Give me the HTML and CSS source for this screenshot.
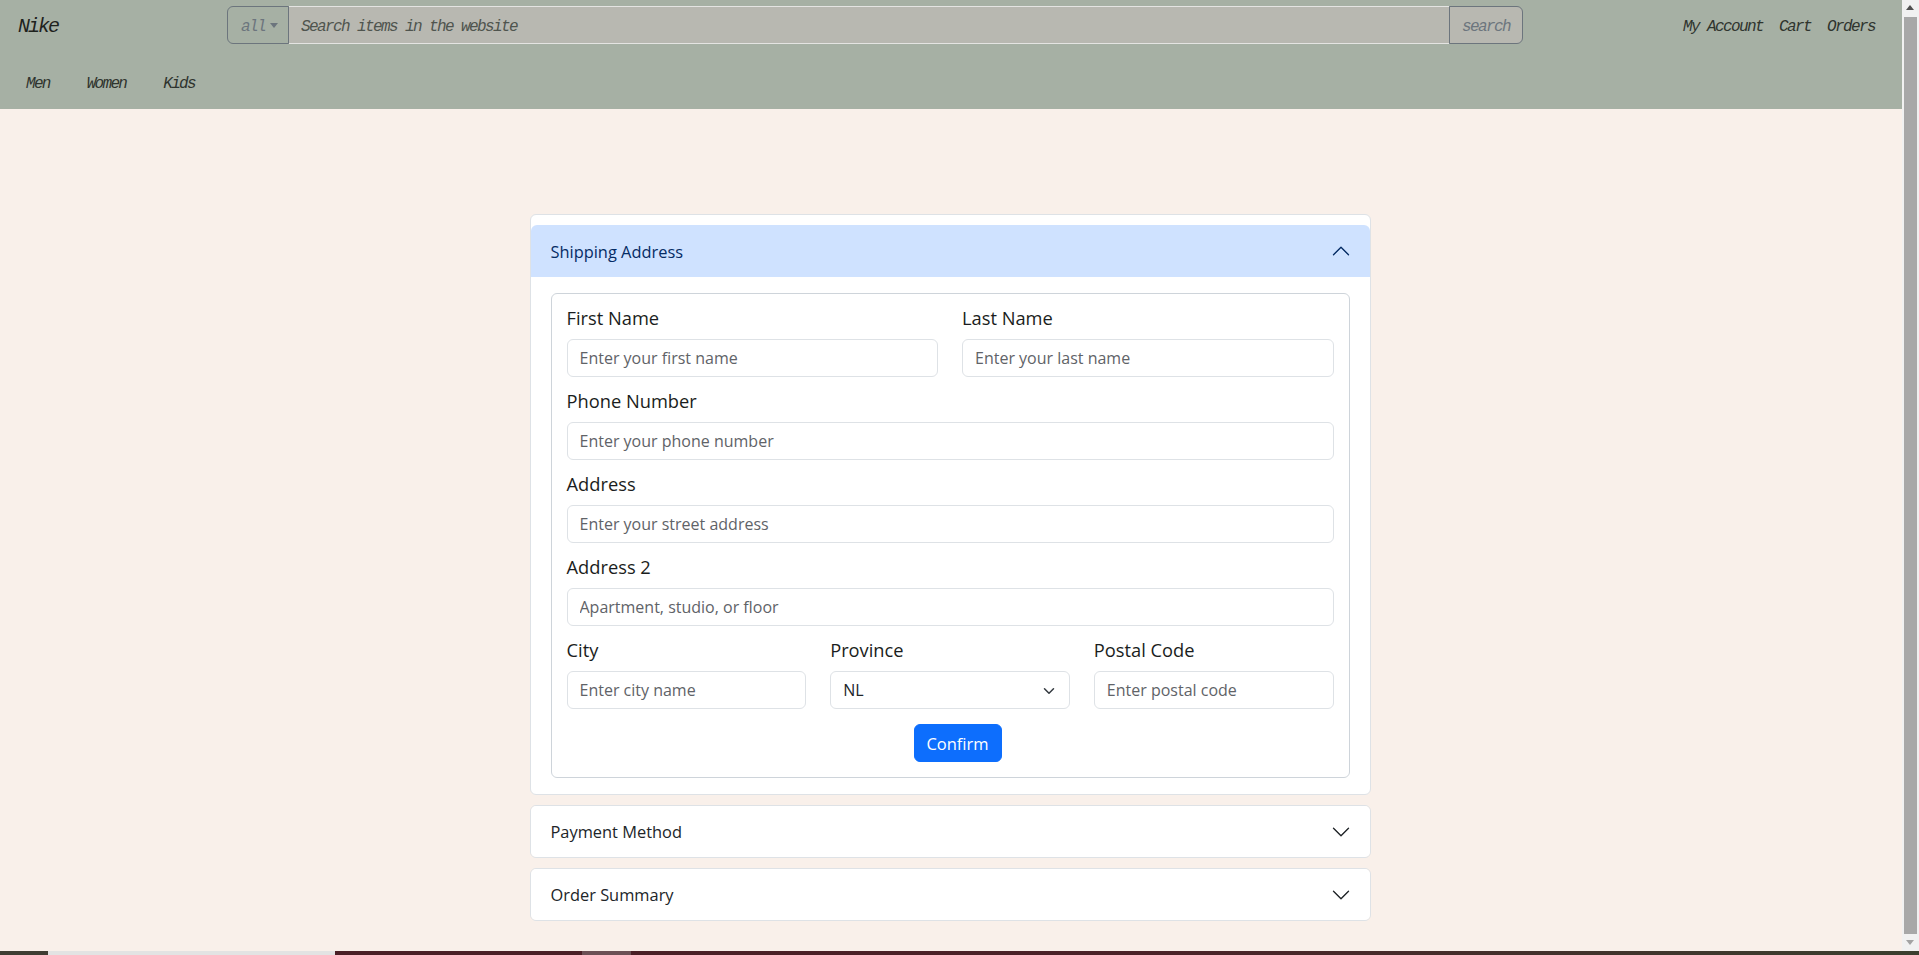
FILE: index.html
```html
<!DOCTYPE html>
<html lang="en">
<head>
<meta charset="utf-8">
<title>Checkout - Nike</title>
<link rel="stylesheet" href="styles.css">
</head>
<body>
<div class="page">
<header class="topbar">
  <div class="topbar-row">
    <a class="brand" href="#">Nike</a>
    <form class="search">
      <button type="button" class="search-cat">all<span class="caret"></span></button>
      <input class="search-input" type="text" placeholder="Search items in the website">
      <button type="button" class="search-btn">search</button>
    </form>
    <nav class="account-nav">
      <a href="#">My Account</a>
      <a href="#">Cart</a>
      <a href="#">Orders</a>
    </nav>
  </div>
  <nav class="cat-nav">
    <a href="#">Men</a>
    <a href="#">Women</a>
    <a href="#">Kids</a>
  </nav>
</header>

<main class="checkout">
  <section class="acc-item acc-first">
    <button type="button" class="acc-head acc-open">
      <span>Shipping Address</span>
      <svg class="chev" viewBox="0 0 16 16" width="20" height="20"><path d="M2 5L8 11L14 5" fill="none" stroke="currentColor" stroke-width="1.1" stroke-linecap="round" stroke-linejoin="round"/></svg>
    </button>
    <div class="acc-body">
      <form class="ship-form">
        <div class="row two">
          <div class="field">
            <label>First Name</label>
            <input type="text" placeholder="Enter your first name">
          </div>
          <div class="field">
            <label>Last Name</label>
            <input type="text" placeholder="Enter your last name">
          </div>
        </div>
        <div class="row">
          <div class="field">
            <label>Phone Number</label>
            <input type="text" placeholder="Enter your phone number">
          </div>
        </div>
        <div class="row">
          <div class="field">
            <label>Address</label>
            <input type="text" placeholder="Enter your street address">
          </div>
        </div>
        <div class="row">
          <div class="field">
            <label>Address 2</label>
            <input type="text" placeholder="Apartment, studio, or floor">
          </div>
        </div>
        <div class="row three">
          <div class="field">
            <label>City</label>
            <input type="text" placeholder="Enter city name">
          </div>
          <div class="field">
            <label>Province</label>
            <div class="select">NL
              <svg class="select-arrow" viewBox="0 0 16 16" width="16" height="12"><path d="m2 5 6 6 6-6" fill="none" stroke="#343a40" stroke-width="2" stroke-linecap="round" stroke-linejoin="round"/></svg>
            </div>
          </div>
          <div class="field">
            <label>Postal Code</label>
            <input type="text" placeholder="Enter postal code">
          </div>
        </div>
        <div class="actions">
          <button type="button" class="btn-confirm">Confirm</button>
        </div>
      </form>
    </div>
  </section>

  <section class="acc-item">
    <button type="button" class="acc-head">
      <span>Payment Method</span>
      <svg class="chev" viewBox="0 0 16 16" width="20" height="20"><path d="M2 5L8 11L14 5" fill="none" stroke="currentColor" stroke-width="1.1" stroke-linecap="round" stroke-linejoin="round"/></svg>
    </button>
  </section>

  <section class="acc-item">
    <button type="button" class="acc-head">
      <span>Order Summary</span>
      <svg class="chev" viewBox="0 0 16 16" width="20" height="20"><path d="M2 5L8 11L14 5" fill="none" stroke="currentColor" stroke-width="1.1" stroke-linecap="round" stroke-linejoin="round"/></svg>
    </button>
  </section>
</main>
</div>

<div class="scrollbar" aria-hidden="true">
  <span class="sb-arrow sb-up"></span>
  <span class="sb-thumb"></span>
  <span class="sb-arrow sb-down"></span>
</div>
<div class="taskbar" aria-hidden="true"></div>
</body>
</html>
```
FILE: styles.css
```css
* { box-sizing: border-box; }

html, body {
  margin: 0;
  padding: 0;
}

body {
  background: #f9f0ea;
  font-family: "Open Sans", "Noto Sans", sans-serif;
  color: #212529;
  overflow: hidden;
}

.page {
  padding-right: 17px;
}

/* ---------- top bar ---------- */
.topbar {
  background: #a6b0a4;
  height: 109px;
  font-family: "Liberation Mono", monospace;
  font-style: italic;
}

.topbar a {
  color: #2f342e;
  text-decoration: none;
}

.topbar-row {
  display: flex;
  align-items: center;
  padding: 6px 27px 0 18px;
  height: 44px;
}

.brand {
  flex: 0 0 209px;
  font-size: 20px;
  letter-spacing: -2px;
  line-height: 30px;
  padding-top: 3px;
  color: #1e221d !important;
}

.search {
  flex: 1;
  display: flex;
  height: 38px;
  margin: 0;
}

.search-cat,
.search-btn {
  font-family: "Liberation Mono", monospace;
  font-style: italic;
  font-size: 16px;
  letter-spacing: -1.6px;
  color: #6c757d;
  background: transparent;
  border: 1px solid #6c757d;
  padding: 4px 12px 0;
  height: 38px;
  cursor: pointer;
}

.search-cat {
  border-radius: 6px 0 0 6px;
  width: 62px;
  display: flex;
  align-items: center;
  padding-left: 13px;
}

.caret {
  display: inline-block;
  margin: -3px 0 0 5px;
  border-top: 5px solid #6c757d;
  border-left: 4.5px solid transparent;
  border-right: 4.5px solid transparent;
}

.search-input {
  flex: 1;
  min-width: 0;
  height: 38px;
  background: #b8b8b1;
  border: 1px solid #e4e4e2;
  border-left: 0;
  border-right: 0;
  padding: 4px 12px 0;
  font-family: "Liberation Mono", monospace;
  font-style: italic;
  font-size: 16px;
  letter-spacing: -1.6px;
  color: #333;
  outline: none;
}

.search-input::placeholder {
  color: #4f544e;
}

.search-btn {
  width: 74px;
  border-radius: 0 6px 6px 0;
  background: #b8b8b1;
}

.account-nav {
  display: flex;
  gap: 16px;
  margin-left: 160px;
  padding-top: 4px;
  font-size: 16px;
  letter-spacing: -1.6px;
}

.cat-nav {
  display: flex;
  gap: 37px;
  padding: 30px 0 0 26px;
  font-size: 16px;
  letter-spacing: -1.7px;
  line-height: 20px;
}

/* ---------- checkout accordion ---------- */
.checkout {
  width: 841px;
  margin: 0 auto;
  padding: 105px 0 0;
  position: relative;
  left: -1px;
}

.acc-item {
  background: #fff;
  border: 1px solid #dee2e6;
  border-radius: 6px;
  overflow: hidden;
  margin-bottom: 10px;
}

.acc-item:last-child {
  margin-bottom: 0;
}

.acc-first {
  padding-top: 10px;
}

.acc-head {
  display: flex;
  align-items: center;
  justify-content: space-between;
  width: 100%;
  height: 51px;
  padding: 0 19px 0 20px;
  border: 0;
  background: #fff;
  font-family: "Open Sans", "Noto Sans", sans-serif;
  font-size: 16.4px;
  color: #212529;
  text-align: left;
  cursor: pointer;
}

.acc-open {
  height: 52px;
  background: #cfe2ff;
  color: #052c65;
  border-radius: 6px 6px 0 0;
}

.acc-open .chev {
  transform: rotate(180deg);
}

.acc-body {
  padding: 16px 20px;
}

.ship-form {
  border: 1px solid #ced4da;
  border-radius: 6px;
  padding: 10px 15px 15px;
  margin: 0;
}

.row {
  display: grid;
  grid-template-columns: 1fr;
  column-gap: 24px;
  margin-top: 10px;
}

.row:first-child {
  margin-top: 0;
}

.row.two { grid-template-columns: 1fr 1fr; }
.row.three { grid-template-columns: 1fr 1fr 1fr; }

.field label {
  display: block;
  font-size: 18.3px;
  line-height: 27px;
  margin-bottom: 8px;
  color: #1a1d20;
}

.field input,
.select {
  display: block;
  width: 100%;
  height: 38px;
  border: 1px solid #dee2e6;
  border-radius: 6px;
  padding: 0 12px;
  font-family: "Open Sans", "Noto Sans", sans-serif;
  font-size: 16px;
  color: #212529;
  background: #fff;
  outline: none;
}

.field input::placeholder {
  color: #5f6368;
}

.select {
  position: relative;
  display: flex;
  align-items: center;
}

.select-arrow {
  position: absolute;
  right: 12px;
  top: 13px;
}

.actions {
  display: flex;
  justify-content: center;
  padding-left: 15px;
  margin-top: 15px;
}

.btn-confirm {
  height: 38px;
  width: 88px;
  border: 1px solid #0d6efd;
  border-radius: 6px;
  background: #0d6efd;
  color: #fff;
  font-family: "Open Sans", "Noto Sans", sans-serif;
  font-size: 16.5px;
  cursor: pointer;
}

/* ---------- window chrome: scrollbar + taskbar edge ---------- */
.scrollbar {
  position: fixed;
  top: 0;
  right: 0;
  bottom: 4px;
  width: 17px;
  background: #f1f1f1;
  display: flex;
  flex-direction: column;
  align-items: center;
}

.sb-arrow {
  flex: 0 0 17px;
  width: 17px;
  position: relative;
}

.sb-arrow::after {
  content: "";
  position: absolute;
  left: 4px;
  border-left: 4.5px solid transparent;
  border-right: 4.5px solid transparent;
}

.sb-up::after {
  top: 5px;
  border-bottom: 5px solid #505050;
}

.sb-down::after {
  top: 6px;
  border-top: 5px solid #a3a3a3;
}

.sb-thumb {
  flex: 1;
  width: 13px;
  background: #a8a8a8;
}

.taskbar {
  position: fixed;
  left: 0;
  right: 0;
  bottom: 0;
  height: 4px;
  background: linear-gradient(90deg, #3f3d33 0, #3f3d33 48px, #e3e3e3 48px, #e3e3e3 335px, #4a1f26 335px, #4a1f26 582px, #6b5055 582px, #6b5055 631px, #4a1f26 631px, #4b2228 60%, #3b3f2f 100%);
}
```
